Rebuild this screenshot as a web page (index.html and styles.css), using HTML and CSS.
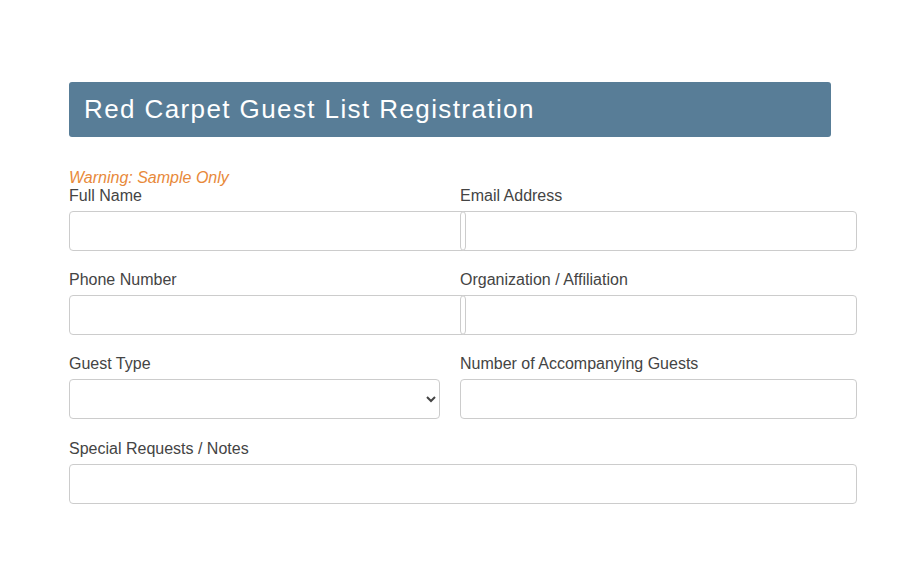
FILE: index.html
```html
<!DOCTYPE html>
<html>
  <head>
    <title>Red Carpet Guest List Registration</title>
    <link rel="stylesheet" href="styles.css">
  </head>

  <body>
    <div class="container">
      <div class="header">
        <h1 class="header-title">Red Carpet Guest List Registration</h1>
      </div>

      <!--Registrering form-->
      <form class="guest-form">
        <p class="warning">Warning: Sample Only</p>
        <div class="form-row">
          <div class="form-group">
            <label for="fullname">Full Name</label>
            <input type="text" id="fullname" />
          </div>
          <div class="form-group">
            <label for="email">Email Address</label>
            <input type="email" id="email" />
          </div>
        </div>
        <div class="form-row">
          <div class="form-group">
            <label for="phone">Phone Number</label>
            <input type="text" id="phone" />
          </div>
          <div class="form-group">
            <label for="org">Organization / Affiliation</label>
            <input type="text" id="org" />
          </div>
        </div>
        <div class="form-row">
          <div class="form-group">
            <label for="guesttype">Guest Type</label>
            <select id="guesttype">
              <option value=""></option>
              <option value="vip">VIP</option>
              <option value="press">Press</option>
              <option value="general">General</option>
            </select>
          </div>
          <div class="form-group">
            <label for="guests">Number of Accompanying Guests</label>
            <input type="number" id="guests" />
          </div>
        </div>
        <div class="form-group notes-group">
          <label for="notes">Special Requests / Notes</label>
          <textarea id="notes" rows="1"></textarea>
        </div>
      </form>
    </div>
  </body>
</html>
```

FILE: styles.css
```css
body {
  margin: 0;
  background-color: #fff;
  font-family: "Liberation Sans", Arial, sans-serif;
}

.container {
  width: 762px;
  margin: 82px auto 0;
}

/* Style the header */
.header {
  background-color: #587d97;
  border-radius: 3px;
  padding: 12px 15px;
}

.header-title {
  margin: 0;
  font-size: 26px;
  font-weight: normal;
  letter-spacing: 1.4px;
  line-height: 31px;
  color: #fff;
}

/* styling the form*/
.guest-form {
  margin-top: 32px;
}

.warning {
  margin: 0;
  font-size: 16px;
  line-height: 18px;
  font-style: italic;
  color: #e8893a;
}

.form-row {
  display: flex;
  gap: 20px;
}

.form-row .form-group {
  flex: 1;
  min-width: 0;
}

.form-group {
  margin-bottom: 20px;
}

.notes-group {
  margin-top: 1px;
}

label {
  display: block;
  font-size: 16px;
  line-height: 18px;
  color: #444;
  margin-bottom: 6px;
}

input,
textarea {
  width: 100%;
  padding: 10px 12px;
  border: 1px solid #ccc;
  border-radius: 4px;
  background: transparent;
  font-size: 16px;
  line-height: 18px;
  font-family: "Liberation Sans", Arial, sans-serif;
  margin: 0;
}

textarea {
  display: block;
  height: 18px;
  resize: none;
}

select {
  width: 100%;
  height: 40px;
  padding: 0 6px;
  border: 1px solid #ccc;
  border-radius: 4px;
  background-color: #fff;
  color: #444;
  font-size: 16px;
  font-family: "Liberation Sans", Arial, sans-serif;
  margin: 0;
}
```
